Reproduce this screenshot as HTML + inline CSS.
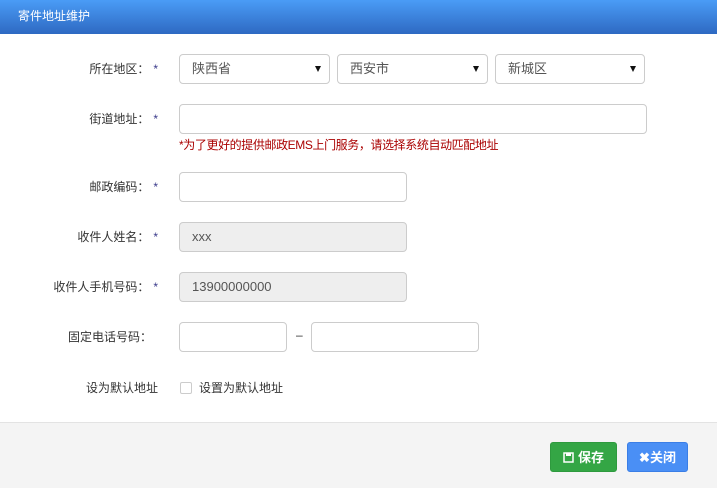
<!DOCTYPE html>
<html><head><meta charset="utf-8"><style>
*{box-sizing:border-box;margin:0;padding:0}
body{width:717px;height:488px;background:#fff;font-family:"Liberation Sans","Noto Sans CJK SC",sans-serif;font-size:12px;color:#333;position:relative;overflow:hidden}
.hd{position:absolute;left:0;top:0;width:717px;height:34px;background:linear-gradient(#4a9cf6,#2e69c2);color:#fff;font-size:12px;line-height:33px;padding-left:18px}
.lab{position:absolute;right:559px;text-align:right;white-space:nowrap;font-size:12px;line-height:14px}
.lab i{font-style:normal;color:#3a3a8a;margin-left:4px}
.in{position:absolute;height:30px;border:1px solid #ccc;border-radius:4px;background:#fff;padding-left:12px;line-height:28px;color:#555;font-size:13px}
.sel:after{content:"";position:absolute;right:8px;top:11px;border-left:3.5px solid transparent;border-right:3.5px solid transparent;border-top:6px solid #111}
.dis{background:#eee}
.tip{position:absolute;left:179px;top:138px;color:#a00;font-size:12px;letter-spacing:-0.4px;line-height:14px}
.ft{position:absolute;left:0;top:422px;width:717px;height:66px;background:#f4f4f4;border-top:1px solid #e3e3e3}
.btn{position:absolute;top:442px;height:30px;border-radius:3px;color:#fff;font-weight:bold;text-align:center;line-height:29px;font-size:13px}
</style></head><body>
<div class="hd">寄件地址维护</div>

<div class="lab" style="top:62px">所在地区：<i>*</i></div>
<div class="in sel" style="left:179px;top:54px;width:151px">陕西省</div>
<div class="in sel" style="left:337px;top:54px;width:151px">西安市</div>
<div class="in sel" style="left:495px;top:54px;width:150px">新城区</div>

<div class="lab" style="top:112px">街道地址：<i>*</i></div>
<div class="in" style="left:179px;top:104px;width:468px"></div>
<div class="tip">*为了更好的提供邮政EMS上门服务，请选择系统自动匹配地址</div>

<div class="lab" style="top:180px">邮政编码：<i>*</i></div>
<div class="in" style="left:179px;top:172px;width:228px"></div>

<div class="lab" style="top:230px">收件人姓名：<i>*</i></div>
<div class="in dis" style="left:179px;top:222px;width:228px">xxx</div>

<div class="lab" style="top:280px">收件人手机号码：<i>*</i></div>
<div class="in dis" style="left:179px;top:272px;width:228px">13900000000</div>

<div class="lab" style="top:330px;right:565px">固定电话号码：</div>
<div class="in" style="left:179px;top:322px;width:108px"></div>
<div style="position:absolute;left:296px;top:328px">–</div>
<div class="in" style="left:311px;top:322px;width:168px"></div>

<div class="lab" style="top:381px">设为默认地址</div>
<div style="position:absolute;left:180px;top:382px;width:12px;height:12px;border:1px solid #ccc;border-radius:2px"></div>
<div style="position:absolute;left:199px;top:381px;line-height:14px">设置为默认地址</div>

<div class="ft"></div>
<div class="btn" style="left:550px;width:67px;background:#34a645;border:1px solid #2e9a3e">
<svg width="11" height="11" viewBox="0 0 11 11" style="vertical-align:-1px;margin-right:4px"><rect x="1" y="1" width="9" height="9" fill="none" stroke="#fff" stroke-width="1.5"/><rect x="3" y="1" width="5" height="3" fill="#fff"/></svg>保存</div>
<div class="btn" style="left:627px;width:61px;background:#4a8ff5;border:1px solid #3a7ee6">✖关闭</div>
</body></html>
